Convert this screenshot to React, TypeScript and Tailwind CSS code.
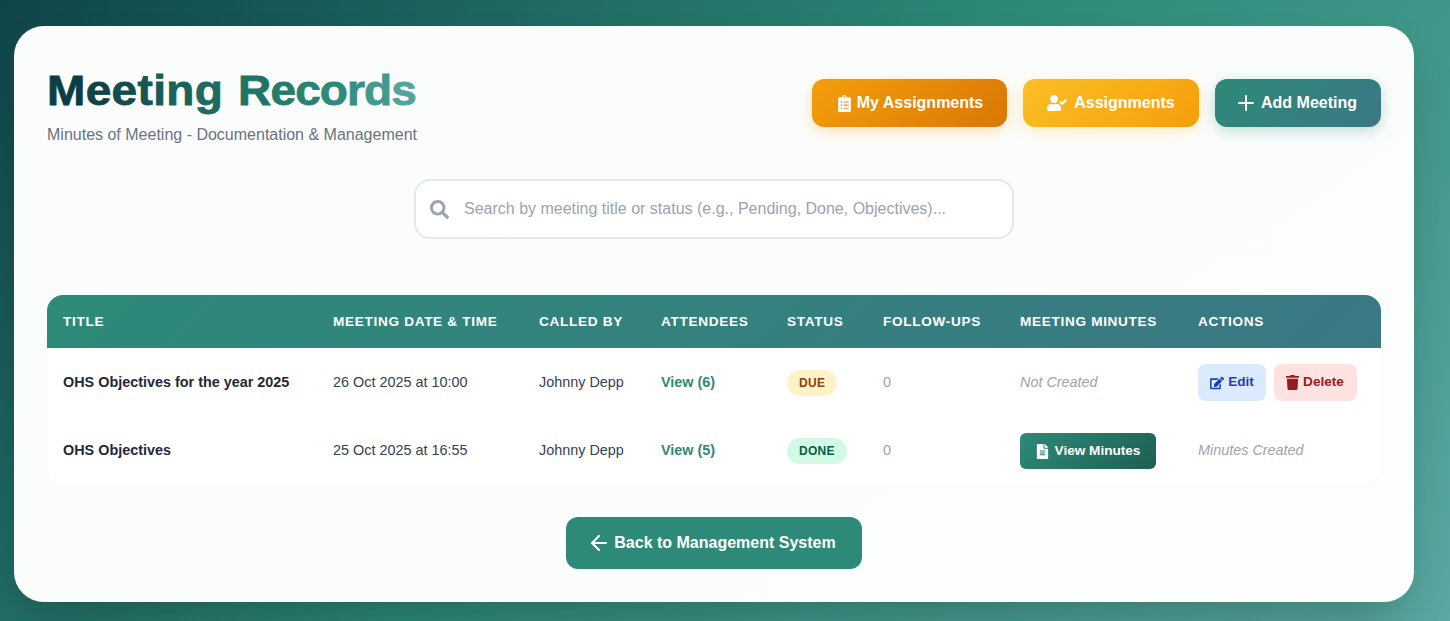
import React from 'react';
import { FaClipboardList, FaEdit, FaFileAlt, FaSearch, FaTrash, FaUserCheck } from 'react-icons/fa';
import { ArrowLeft, Plus } from 'lucide-react';

const thClass = 'px-4 pt-px text-left text-[13.6px] font-bold uppercase tracking-[0.68px] text-white';
const tdClass = 'px-4 text-[14.4px] text-[#374151]';

// colour per letter, dark teal to light teal like the gradient on the title
const firstWord: [string, string][] = [
  ['M', '#0c3d42'], ['e', '#104548'], ['e', '#134d4e'], ['t', '#165553'], ['i', '#185c57'], ['n', '#1a635b'], ['g', '#1d6a60'],
];
const secondWord: [string, string][] = [
  ['R', '#217465'], ['e', '#257c6b'], ['c', '#298370'], ['o', '#2d8a78'], ['r', '#369083'], ['d', '#42998d'], ['s', '#52a49c'],
];

const Letters: React.FC<{ letters: [string, string][] }> = ({ letters }) => (
  <>
    {letters.map(([letter, color], i) => (
      <span key={i} style={{ color, WebkitTextStroke: `0.8px ${color}` }}>{letter}</span>
    ))}
  </>
);

const App: React.FC = () => {
  return (
    <div className="h-[621px] overflow-hidden bg-[linear-gradient(135deg,#0f4449_0%,#2d8a78_50%,#5aa9a3_100%)] pl-[14px] pt-[26px] font-['Liberation_Sans',Arial,sans-serif]">
      <div className="w-[1400px] rounded-[30px] bg-[linear-gradient(145deg,#fbfdfd,#fcfefd)] p-[33px] shadow-2xl">
        {/* Header */}
        <div className="mb-8 flex items-center justify-between">
          <div>
            <h1 className="origin-left scale-x-[1.095] text-[42px] font-extrabold leading-[64px] [word-spacing:2px]">
              <span className="tracking-[0.3px]"><Letters letters={firstWord} /></span>{' '}
              <span className="tracking-[-0.8px]"><Letters letters={secondWord} /></span>
            </h1>
            <p className="text-base text-[#6b7280]">Minutes of Meeting - Documentation &amp; Management</p>
          </div>
          <div className="flex gap-4">
            <button className="flex h-12 w-[195px] items-center justify-center gap-1 rounded-xl bg-[linear-gradient(135deg,#f59e0b,#d97706)] text-base font-bold text-white shadow-[0_4px_15px_rgba(245,158,11,0.3)]">
              <FaClipboardList className="size-[17px]" />
              My Assignments
            </button>
            <button className="flex h-12 w-[176px] items-center justify-center gap-[7px] rounded-xl bg-[linear-gradient(135deg,#fbbf24,#f59e0b)] text-base font-bold text-white shadow-[0_4px_15px_rgba(251,191,36,0.3)]">
              <FaUserCheck className="size-5" />
              Assignments
            </button>
            <button className="flex h-12 w-[166px] items-center justify-center gap-2 rounded-xl bg-[linear-gradient(135deg,#2d8a78,#3b7884)] text-base font-bold text-white shadow-[0_4px_15px_rgba(45,138,120,0.3)]">
              <Plus className="-mx-[5px] size-6" />
              Add Meeting
            </button>
          </div>
        </div>

        {/* Search */}
        <div className="mb-14 flex justify-center">
          <div className="flex h-[60px] w-[600px] items-center gap-[15px] rounded-2xl border-2 border-[#e2e8f0] bg-white pl-[14px]">
            <FaSearch className="size-[19px] text-[#9ca3af]" />
            <span className="text-base text-[#9ca3af]">Search by meeting title or status (e.g., Pending, Done, Objectives)...</span>
          </div>
        </div>

        {/* Table */}
        <div className="overflow-hidden rounded-2xl bg-white shadow-[0_1px_4px_rgba(0,0,0,0.02)]">
          <table className="w-full table-fixed border-collapse">
            <colgroup>
              <col className="w-[270px]" />
              <col className="w-[206px]" />
              <col className="w-[122px]" />
              <col className="w-[126px]" />
              <col className="w-[96px]" />
              <col className="w-[137px]" />
              <col className="w-[178px]" />
              <col className="w-[199px]" />
            </colgroup>
            <thead>
              <tr className="h-[53px] bg-[linear-gradient(135deg,#2d8a78,#3b7884)]">
                <th className={thClass}>Title</th>
                <th className={thClass}>Meeting Date &amp; Time</th>
                <th className={thClass}>Called By</th>
                <th className={thClass}>Attendees</th>
                <th className={thClass}>Status</th>
                <th className={thClass}>Follow-ups</th>
                <th className={thClass}>Meeting Minutes</th>
                <th className={thClass}>Actions</th>
              </tr>
            </thead>
            <tbody>
              <tr className="h-[69px]">
                <td className="px-4 text-[14.4px] font-bold text-[#1f2937]">OHS Objectives for the year 2025</td>
                <td className={tdClass}>26 Oct 2025 at 10:00</td>
                <td className={tdClass}>Johnny Depp</td>
                <td className="px-4 text-[14.4px] font-bold text-[#2d8a78]">View (6)</td>
                <td className="px-4">
                  <span className="inline-block rounded-full bg-[#fef3c7] px-3 py-[5px] text-xs font-bold tracking-[0.3px] text-[#92400e]">DUE</span>
                </td>
                <td className="px-4 text-[14.4px] text-[#9ca3af]">0</td>
                <td className="px-4 text-[14.4px] italic text-[#9ca3af]">Not Created</td>
                <td className="px-4">
                  <div className="flex gap-2">
                    <button className="flex h-[37px] w-[68px] items-center justify-center gap-1 rounded-lg bg-[#dbeafe] text-[13.6px] font-bold text-[#1e40af]">
                      <FaEdit className="size-[14px]" />
                      Edit
                    </button>
                    <button className="flex h-[37px] w-[83px] items-center justify-center gap-[3px] rounded-lg bg-[#fee2e2] pr-[2px] text-[13.6px] font-bold text-[#991b1b]">
                      <FaTrash className="size-[15px]" />
                      Delete
                    </button>
                  </div>
                </td>
              </tr>
              <tr className="h-[68px]">
                <td className="px-4 text-[14.4px] font-bold text-[#1f2937]">OHS Objectives</td>
                <td className={tdClass}>25 Oct 2025 at 16:55</td>
                <td className={tdClass}>Johnny Depp</td>
                <td className="px-4 text-[14.4px] font-bold text-[#2d8a78]">View (5)</td>
                <td className="px-4">
                  <span className="inline-block rounded-full bg-[#d1fae5] px-3 py-[5px] text-xs font-bold tracking-[0.3px] text-[#065f46]">DONE</span>
                </td>
                <td className="px-4 text-[14.4px] text-[#9ca3af]">0</td>
                <td className="px-4">
                  <button className="flex h-9 w-[136px] items-center justify-center gap-[5px] rounded-md bg-[linear-gradient(135deg,#2d8a78,#1f5f55)] pr-px text-[13.6px] font-bold text-white">
                    <FaFileAlt className="size-[15px]" />
                    View Minutes
                  </button>
                </td>
                <td className="px-4 text-[14.4px] italic text-[#9ca3af]">Minutes Created</td>
              </tr>
            </tbody>
          </table>
        </div>

        {/* Back */}
        <div className="mt-8 flex justify-center">
          <button className="flex h-[52px] w-[296px] items-center justify-center gap-2 rounded-xl bg-[#2d8a78] text-base font-bold text-white">
            <ArrowLeft className="-mx-[5px] size-6" />
            Back to Management System
          </button>
        </div>
      </div>
    </div>
  );
};

export default App;
